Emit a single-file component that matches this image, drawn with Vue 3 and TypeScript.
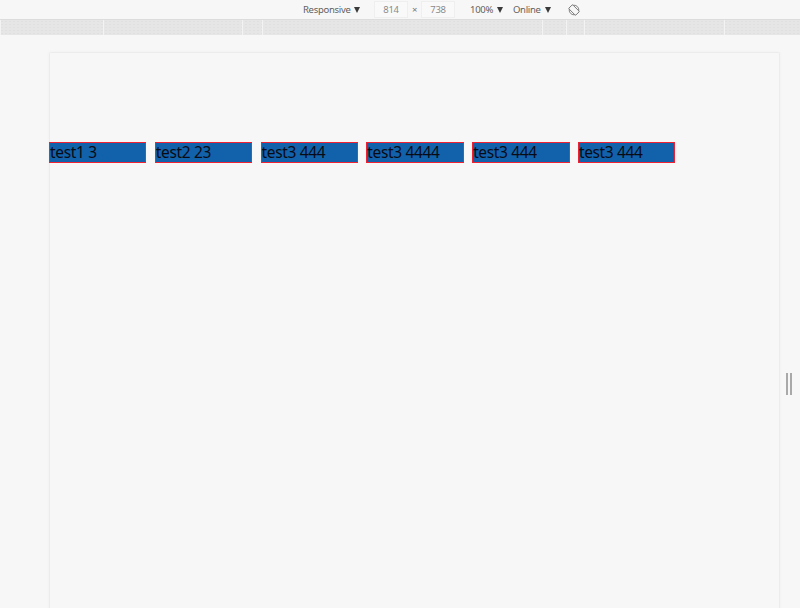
<script setup lang="ts">
const items: string[] = ['test1 3', 'test2 23', 'test3 444', 'test3 4444', 'test3 444', 'test3 444']
const segments: number[] = [1, 103, 139, 20, 280, 24, 18, 140, 75]
</script>

<template>
  <div class="page">
    <header class="toolbar">
      <span class="tool responsive">Responsive<i class="caret"></i></span>
      <span class="dim">814</span>
      <span class="times">×</span>
      <span class="dim">738</span>
      <span class="tool zoom">100%<i class="caret"></i></span>
      <span class="tool online">Online<i class="caret"></i></span>
      <svg class="rotate" width="12" height="12" viewBox="0 0 13 13" fill="none" stroke="#777" stroke-width="1">
        <circle cx="6.5" cy="6.5" r="5.2" />
        <rect x="3.5" y="1.2" width="6" height="10.6" rx="0.8" transform="rotate(-45 6.5 6.5)" fill="#f7f7f7" />
      </svg>
    </header>
    <div class="ruler">
      <div v-for="(w, i) in segments" :key="i" class="segment" :style="{ width: w + 'px' }"></div>
    </div>
    <main class="stage">
      <section class="canvas">
        <div class="list">
          <div v-for="(item, i) in items" :key="i" class="item">{{ item }}</div>
        </div>
      </section>
    </main>
    <div class="handle"><b></b><b></b></div>
  </div>
</template>

<style>
html, body { margin: 0; background: #f7f7f7; overflow: hidden; }
</style>

<style scoped>
.page {
  position: relative;
  width: 800px;
  height: 608px;
  overflow: hidden;
  background: #f7f7f7;
  font-family: "Noto Sans", "Open Sans", sans-serif;
  display: flex;
  flex-direction: column;
}
.toolbar {
  height: 19px;
  flex: none;
  display: flex;
  align-items: center;
  padding-left: 303px;
  box-sizing: border-box;
  font-size: 9.5px;
  letter-spacing: -0.3px;
  color: #5f5f5f;
}
.tool { display: inline-flex; align-items: center; white-space: nowrap; }
.caret {
  width: 0;
  height: 0;
  margin-left: 4px;
  border-left: 3.5px solid transparent;
  border-right: 3.5px solid transparent;
  border-top: 6px solid #3a3a3a;
}
.responsive { width: 71px; }
.zoom { width: 43px; margin-left: 15px; }
.online { width: 56px; }
.dim {
  width: 34px;
  height: 17px;
  box-sizing: border-box;
  border: 1px solid #efefef;
  background: #f9f9f9;
  color: #8a8a8a;
  text-align: center;
  line-height: 15px;
}
.times { width: 13px; text-align: center; color: #777; }
.rotate { margin-left: -1px; }
.ruler {
  height: 16px;
  flex: none;
  display: flex;
  box-sizing: border-box;
  border-top: 1px solid #dcdcdc;
  background-color: #e6e6e6;
  background-image: radial-gradient(#e0e0e0 0.6px, transparent 0.7px);
  background-size: 4px 3px;
}
.segment {
  flex: none;
  box-sizing: border-box;
  border-right: 1px solid #f3f3f3;
}
.segment:last-child { flex: 1; border-right: 0; }
.stage {
  flex: 1;
  padding: 17px 20px 0 49px;
  min-height: 0;
}
.canvas {
  height: 570px;
  box-sizing: border-box;
  border-top: 1px solid #ececec;
  border-right: 1px solid #ececec;
  border-left: 1px solid #ececec;
  border-radius: 2px 2px 0 0;
  padding-top: 89px;
  background: #f7f7f7;
  box-shadow: 0 0 3px #efefef;
}
.list {
  display: flex;
  gap: 8.4px;
  margin-left: -1px;
}
.item {
  width: 97.4px;
  height: 21px;
  box-sizing: border-box;
  border: 1px solid #ee2233;
  background: #1262ab;
  color: #0a0a14;
  font-size: 15.5px;
  letter-spacing: -0.35px;
  line-height: 19px;
  white-space: nowrap;
}
.handle {
  position: absolute;
  left: 786px;
  top: 373px;
  display: flex;
  gap: 2px;
}
.handle b {
  display: block;
  width: 2px;
  height: 22px;
  background: #a9a9a9;
}
</style>
